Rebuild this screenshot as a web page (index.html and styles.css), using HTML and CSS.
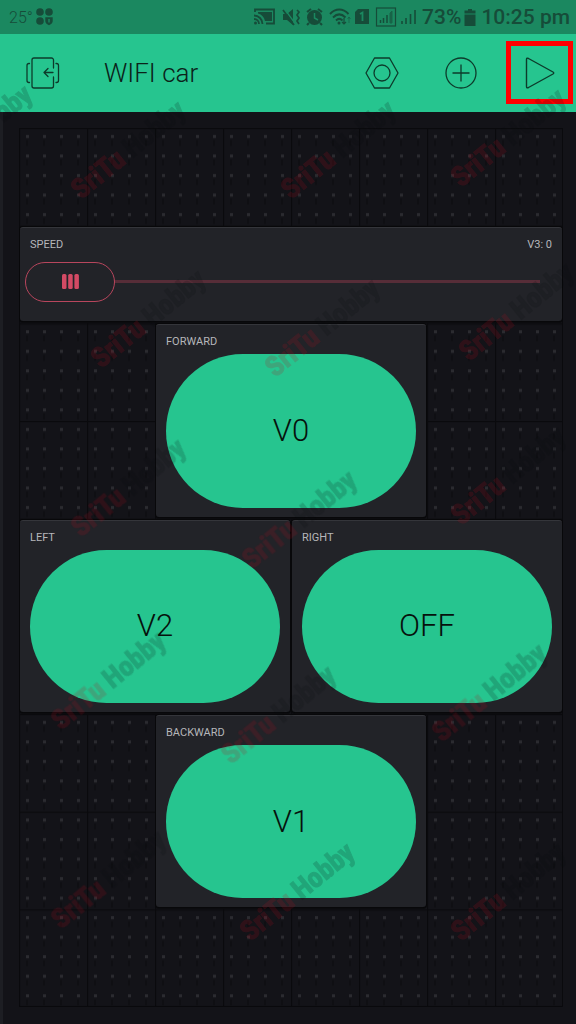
FILE: index.html
```html
<!DOCTYPE html>
<html lang="en">
<head>
<meta charset="utf-8">
<meta name="viewport" content="width=device-width, initial-scale=1">
<title>WIFI car</title>
<link rel="stylesheet" href="styles.css">
</head>
<body>
<div class="app">
  <div class="status">
    <span class="temp">25°</span>
    <svg class="apps" width="18" height="18" viewBox="0 0 18 18" fill="currentColor" aria-hidden="true">
      <circle cx="4" cy="4" r="3.8"/><circle cx="13" cy="4" r="3.8"/><circle cx="4" cy="13" r="3.8"/>
      <path fill-rule="evenodd" d="M9.3 9.3h7.4v4c0 2-2 3-3.7 4-1.700-1-3.700-2-3.700-4zM12.300 11v3.500h1.400v-3.500z"/>
    </svg>
    <svg class="indicators" width="164" height="20" viewBox="0 0 164 20" fill="none" stroke="currentColor" stroke-width="1.800" aria-hidden="true">
      <path d="M2 5V2.500h19v14h-8"/><path d="M1 8.500a8.500 8.500 0 0 1 8.500 8.500M1 12a5 5 0 0 1 5 5"/><path d="M5 5h14v9h-7C11 10 9 7.500 5 6.500z" fill="currentColor" stroke="none"/><circle cx="2.500" cy="16" r="1.500" fill="currentColor" stroke="none"/>
      <path d="M30 7h4l6-5v16l-6-5h-4z" fill="currentColor" stroke="none"/><path d="M31.500 2l11 15" stroke="#1b8860" stroke-width="1.300"/><path d="M30 3l11 15M44 3l2 2-2 3 2 3-2 3 2 3" stroke-width="1.700"/>
      <circle cx="61.500" cy="10.500" r="7.500" fill="currentColor" stroke="none"/><path d="M54 5l4-3M69 5l-4-3M56 16l-2 2M67 16l2 2" stroke-width="2"/><path d="M61.500 6v5l3.500 2" stroke="#1b8860" stroke-width="1.500"/>
      <path d="M77 7c5.500-6 13-6 18.500 0M80 10.500c4-4 8.500-4 12.500 0M83 13.500c2-2 4.500-2 6.500 0" stroke-width="1.900"/><circle cx="86" cy="16" r="1.500" fill="currentColor" stroke="none"/><path d="M91 11v6m-2-2l2 2 2-2" stroke-width="1.200"/><path d="M96 16v-6m-1.500 2l1.500-2 1.500 2" stroke-width="1" opacity=".5"/>
      <path d="M105 2h11v15h-14V5z" fill="currentColor" stroke="none"/><path d="M107 7l2.500-1.500V14" stroke="#1b8860" stroke-width="1.800"/>
      <rect x="123.500" y="1" width="19" height="18" stroke-width="1.200"/><path d="M127.500 16v-3M130.500 16v-5M134 16V8" stroke-width="1.500"/><path d="M137 16V6l2-2v12z" fill="currentColor" stroke-width="1" opacity=".6"/>
      <path d="M149 17v-3M153 17v-6M157.500 17V7M162 17V3" stroke-width="1.600"/>
    </svg>
    <span class="reading">73%</span>
    <svg class="battery" width="12" height="17" viewBox="0 0 12 17" fill="currentColor" aria-hidden="true"><path d="M4 0h4v1.500h3.500v3H.500v-3H4z"/><path d="M.500 5.500h11V17H.500z"/></svg>
    <time class="reading">10:25 pm</time>
  </div>

  <header class="bar">
    <button class="icon" type="button" aria-label="Exit project">
      <svg width="34" height="32" viewBox="0 0 34 32" fill="none" stroke="currentColor" stroke-width="1.300" stroke-linecap="round" stroke-linejoin="round"><path d="M27.500 11V3a2 2 0 0 0-2-2H8a2 2 0 0 0-2 2v26a2 2 0 0 0 2 2h17.500a2 2 0 0 0 2-2v-9M27 15.500h-9m4-4l-4 4 4 4M3.500 6.500H3a2 2 0 0 0-2 2v15a2 2 0 0 0 2 2h.500M30 6.500h.500a2 2 0 0 1 2 2v15a2 2 0 0 1-2 2H30"/></svg>
    </button>
    <h1 class="title">WIFI car</h1>
    <button class="icon" type="button" aria-label="Project settings">
      <svg width="34" height="32" viewBox="0 0 34 32" fill="none" stroke="currentColor" stroke-width="1.300" stroke-linejoin="round"><path d="M9.500 1h15L33 16l-8.500 15h-15L1 16z"/><circle cx="17" cy="16" r="8"/></svg>
    </button>
    <button class="icon" type="button" aria-label="Add widget">
      <svg width="32" height="32" viewBox="0 0 32 32" fill="none" stroke="currentColor" stroke-width="1.300"><circle cx="16" cy="16" r="15"/><path d="M16 7.500v17M7.500 16h17"/></svg>
    </button>
    <button class="icon play" type="button" aria-label="Run project">
      <svg width="30" height="32" viewBox="0 0 30 32" fill="none" stroke="currentColor" stroke-width="1.400" stroke-linejoin="round"><path d="M1.500 2.500q0-2 2-1L28 15q1.500 1 0 2L3.500 30.500q-2 1-2-1z"/></svg>
    </button>
  </header>

  <main class="board">
    <svg class="cells" viewBox="0 0 544 879" preserveAspectRatio="none" aria-hidden="true">
      <defs>
        <pattern id="dots" width="17" height="19.530" patternUnits="userSpaceOnUse">
          <rect x="7" y="7" width="3" height="3" fill="#2b2b30"/><path d="M8 12v6" stroke="#0f0f13" stroke-width="2"/>
        </pattern>
        <pattern id="lines" width="68" height="97.667" patternUnits="userSpaceOnUse">
          <path d="M.500 97.667V.500H68" fill="none" stroke="#0a0a0d" stroke-width="1.500"/>
        </pattern>
      </defs>
      <rect width="544" height="879" fill="url(#dots)"/>
      <rect width="544" height="879" fill="url(#lines)"/>
      <path d="M543.500 0v878.500H0" fill="none" stroke="#0a0a0d"/>
    </svg>

    <section class="widget speed">
      <div class="caption"><label for="speed">SPEED</label><output for="speed">V3: 0</output></div>
      <input class="slider" id="speed" type="range" min="0" max="255" value="0">
    </section>
    <section class="widget forward">
      <h2 class="caption" id="forward">FORWARD</h2>
      <button class="pad" type="button" aria-describedby="forward">V0</button>
    </section>
    <section class="widget left">
      <h2 class="caption" id="left">LEFT</h2>
      <button class="pad" type="button" aria-describedby="left">V2</button>
    </section>
    <section class="widget right">
      <h2 class="caption" id="right">RIGHT</h2>
      <button class="pad" type="button" aria-describedby="right">OFF</button>
    </section>
    <section class="widget backward">
      <h2 class="caption" id="backward">BACKWARD</h2>
      <button class="pad" type="button" aria-describedby="backward">V1</button>
    </section>
  </main>

  <svg class="marks" viewBox="0 0 576 1024" preserveAspectRatio="xMidYMin slice" aria-hidden="true">
    <g class="mark">
      <text transform="translate(3 123) rotate(-39)">bby</text>
      <text transform="translate(81 200) rotate(-39)"><tspan class="red">SriTu</tspan> Hobby</text>
      <text transform="translate(291 200) rotate(-39)"><tspan class="red">SriTu</tspan> Hobby</text>
      <text transform="translate(461 188) rotate(-39)"><tspan class="red">SriTu</tspan> Hobby</text>
      <text transform="translate(101 369) rotate(-39)"><tspan class="red">SriTu</tspan> Hobby</text>
      <text transform="translate(275 378) rotate(-39)"><tspan class="red">SriTu</tspan> Hobby</text>
      <text transform="translate(469 362) rotate(-39)"><tspan class="red">SriTu</tspan> Hobby</text>
      <text transform="translate(81 538) rotate(-39)"><tspan class="red">SriTu</tspan> Hobby</text>
      <text transform="translate(252 570) rotate(-39)"><tspan class="red">SriTu</tspan> Hobby</text>
      <text transform="translate(461 526) rotate(-39)"><tspan class="red">SriTu</tspan> Hobby</text>
      <text transform="translate(61 731) rotate(-39)"><tspan class="red">SriTu</tspan> Hobby</text>
      <text transform="translate(231 765) rotate(-39)"><tspan class="red">SriTu</tspan> Hobby</text>
      <text transform="translate(442 743) rotate(-39)"><tspan class="red">SriTu</tspan> Hobby</text>
      <text transform="translate(61 930) rotate(-39)"><tspan class="red">SriTu</tspan> Hobby</text>
      <text transform="translate(250 942) rotate(-39)"><tspan class="red">SriTu</tspan> Hobby</text>
      <text transform="translate(461 942) rotate(-39)"><tspan class="red">SriTu</tspan> Hobby</text>
    </g>
  </svg>
</div>
</body>
</html>
```

FILE: styles.css
```css
* { box-sizing: border-box; }

body {
  margin: 0;
  background: #131318;
  font-family: Roboto, "Liberation Sans", sans-serif;
}

.app {
  position: relative;
  display: flex;
  flex-direction: column;
  min-height: 100vh;
  overflow: hidden;
}

.status {
  display: flex;
  align-items: center;
  height: 34px;
  padding: 0 6px 0 9px;
  background: #1b8860;
  color: #164c39;
}

.temp { font-size: 16px; font-weight: 300; }
.apps { margin-left: 3px; }
.indicators { margin-left: auto; }
.reading { margin-left: 5px; font-size: 21px; font-weight: 500; }
.battery { margin-left: 3px; }

.bar {
  display: flex;
  align-items: center;
  height: 78px;
  padding: 0 3px 1px 26px;
  background: #26c58f;
  color: #0d3b2b;
}

.icon {
  display: flex;
  align-items: center;
  justify-content: center;
  padding: 0;
  border: 0;
  background: none;
  color: inherit;
}

.icon + .icon { margin-left: 46px; }

.icon.play {
  width: 67px;
  height: 63px;
  margin-left: 29px;
  border: 5px solid #ff0000;
}

.title {
  flex: 1;
  margin: 0 0 0 44px;
  color: #0b2219;
  font-size: 26px;
  font-weight: 300;
}

.board {
  flex: 1;
  display: grid;
  grid-template-columns: repeat(8, minmax(0, 1fr));
  grid-template-rows: repeat(9, minmax(96px, 1fr));
  padding: 16px 13px 17px 16px;
  border-left: 3px solid #1d1e23;
}

.cells {
  grid-area: 1 / 1 / -1 / -1;
  width: 100%;
  height: 100%;
  contain: size;
}

.widget {
  display: flex;
  flex-direction: column;
  margin: 1px 1px 2px;
  padding: 0 10px 9px;
  border-top: 1px solid #34353a;
  border-radius: 3px;
  background: #222328;
  box-shadow: 0 0 0 1px #08080a, 0 1px 0 1px #0b0b0e;
}

.speed { grid-area: 2 / 1 / 3 / 9; }
.forward { grid-area: 3 / 3 / 5 / 7; }
.left { grid-area: 5 / 1 / 7 / 5; }
.right { grid-area: 5 / 5 / 7 / 9; }
.backward { grid-area: 7 / 3 / 9 / 7; }

.caption {
  display: flex;
  justify-content: space-between;
  margin: 0;
  padding: 9px 0 4px;
  color: #b5b6ba;
  font-size: 11px;
  font-weight: 400;
  line-height: 16px;
}

.pad {
  flex: 1;
  padding: 0;
  border: 0;
  border-radius: 999px;
  background: #26c58f;
  color: #06120d;
  font: 300 31px/40px Roboto, "Liberation Sans", sans-serif;
}

.slider {
  appearance: none;
  height: 40px;
  margin: 5px 12px 0 -5px;
  background: linear-gradient(#572d38, #572d38) center / 100% 3px no-repeat;
}

.slider::-webkit-slider-thumb {
  appearance: none;
  width: 90px;
  height: 40px;
  border: 1px solid #b8465d;
  border-radius: 20px;
  background: #222328 url("data:image/svg+xml,%3Csvg xmlns='http://www.w3.org/2000/svg' width='17' height='15' fill='%23d34a64'%3E%3Crect width='4.500' height='15' rx='1.500'/%3E%3Crect x='6.200' width='4.500' height='15' rx='1.500'/%3E%3Crect x='12.400' width='4.500' height='15' rx='1.500'/%3E%3C/svg%3E") center no-repeat;
}

.marks {
  position: absolute;
  inset: 0;
  width: 100%;
  height: 100%;
  pointer-events: none;
}

.mark {
  fill: #0c0e12;
  stroke: #0c0e12;
  stroke-width: 1;
  opacity: 0.17;
  font-family: "Liberation Sans Narrow", "Roboto Condensed", "DejaVu Sans Condensed", sans-serif;
  font-size: 28px;
  font-weight: 700;
}

.red {
  fill: #b80f22;
  stroke: #b80f22;
}
```
